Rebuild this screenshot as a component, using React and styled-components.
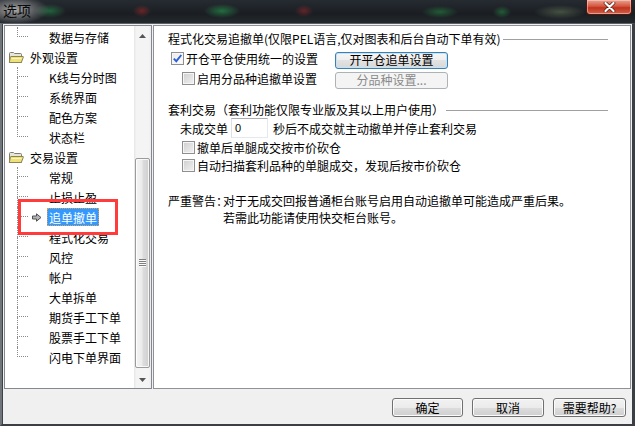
import React from "react";
import styled, { createGlobalStyle, css } from "styled-components";

const GlobalStyle = createGlobalStyle`
  html, body { margin: 0; padding: 0; background: #1b1f24; }
  body { width: 635px; height: 426px; overflow: hidden; }
  * { box-sizing: border-box; }
`;

const FONT = `"Noto Sans CJK SC", "Liberation Sans", sans-serif`;

const Window = styled.div`
  width: 635px;
  height: 426px;
  display: flex;
  flex-direction: column;
  overflow: hidden;
  font-family: ${FONT};
  font-size: 12px;
  color: #000;
`;

const TitleBar = styled.div`
  flex: none;
  height: 23px;
  display: flex;
  justify-content: space-between;
  align-items: flex-start;
  background:
    radial-gradient(ellipse 34px 14px at 15px 10px, rgba(175,175,175,0.95), rgba(150,150,150,0) 100%),
    radial-gradient(ellipse 16px 7px at 50px 11px, rgba(40,150,80,0.55), rgba(40,150,80,0) 100%),
    radial-gradient(ellipse 9px 6px at 142px 11px, rgba(170,40,40,0.55), rgba(170,40,40,0) 100%),
    radial-gradient(ellipse 18px 7px at 222px 11px, rgba(40,160,80,0.6), rgba(40,160,80,0) 100%),
    radial-gradient(ellipse 9px 6px at 304px 11px, rgba(170,40,40,0.5), rgba(170,40,40,0) 100%),
    radial-gradient(ellipse 18px 6px at 440px 12px, rgba(40,150,70,0.5), rgba(40,150,70,0) 100%),
    radial-gradient(ellipse 9px 6px at 502px 12px, rgba(40,150,70,0.5), rgba(40,150,70,0) 100%),
    radial-gradient(ellipse 26px 7px at 560px 12px, rgba(120,140,100,0.45), rgba(120,140,100,0) 100%),
    linear-gradient(to bottom, #262b31 0%, #1a1e23 60%, #24292e 100%);
`;

const Title = styled.div`
  padding: 2px 0 0 3px;
  font-size: 14px;
  line-height: 17px;
  color: #0a0a0a;
`;

const CloseButton = styled.div`
  width: 46px;
  height: 15px;
  margin-right: 3px;
  display: flex;
  align-items: center;
  justify-content: center;
  border: 1px solid #4a1a12;
  border-top: none;
  border-radius: 0 0 4px 4px;
  background: linear-gradient(to bottom, #e8a393 0%, #d4553e 45%, #c1321c 55%, #d2624a 100%);
  box-shadow: inset 0 0 0 1px rgba(255,220,210,0.5);
`;

const Body = styled.div`
  flex: 1;
  display: flex;
  flex-direction: column;
  background: #f0f0f0;
  border-top: 1px solid #5a6066;
  border-left: 2px solid #70757a;
  border-right: 3px solid #3a3f45;
  border-bottom: 2px solid #3a3f45;
  box-shadow: inset 1px 0 0 #3e4247;
  padding: 1px 1px 0 2px;
`;

const Main = styled.div`
  flex: none;
  height: 364px;
  display: flex;
  gap: 1px;
`;

const TreePanel = styled.div`
  width: 148px;
  flex: none;
  display: flex;
  background: #fff;
  border: 1px solid #828790;
`;

const TreeList = styled.div`
  flex: 1;
  min-width: 0;
  padding-top: 1px;
  display: flex;
  flex-direction: column;
  overflow: hidden;
`;

const TreeRow = styled.div`
  height: 20px;
  flex: none;
  display: flex;
  align-items: center;
  padding-left: ${(p) => (p.$parent ? 3 : 0)}px;
  ${(p) => p.$selected && css`position: relative;`}
`;

const Guide = styled.span`
  width: 42px;
  height: 20px;
  flex: none;
  display: flex;
  padding-left: 12px;
`;

const Connector = styled.span`
  width: 11px;
  height: 20px;
  display: flex;
  flex-direction: column;
`;

const ConnectorTop = styled.span`
  height: 10px;
  border-left: 1px dotted #8a8a8a;
  border-bottom: 1px dotted #8a8a8a;
`;

const ConnectorBottom = styled.span`
  flex: 1;
  border-left: 1px dotted ${(p) => (p.$last ? "transparent" : "#8a8a8a")};
`;

const ArrowSlot = styled.span`
  flex: 1;
  display: flex;
  align-items: center;
  padding-left: 4px;
`;

const Label = styled.span`
  height: 18px;
  line-height: 17px;
  padding: 0 1px;
  white-space: nowrap;
  margin-left: ${(p) => (p.$parent ? 4 : 0)}px;
  border: 1px solid transparent;
  ${(p) =>
    p.$selected &&
    css`
      background: #3399ff;
      color: #fff;
      border: 1px dotted #e0a050;
    `}
`;

const Annotation = styled.span`
  position: absolute;
  left: 13px;
  top: -8px;
  width: 100px;
  height: 36px;
  border: 3px solid #ff3b3b;
  pointer-events: none;
  z-index: 2;
`;

const ScrollBar = styled.div`
  width: 17px;
  flex: none;
  display: flex;
  flex-direction: column;
  background: linear-gradient(to right, #e6e6e6 0%, #f4f4f4 15%, #f4f4f4 85%, #ececec 100%);
`;

const ScrollArrow = styled.div`
  height: 17px;
  flex: none;
  display: flex;
  align-items: center;
  justify-content: center;
  padding-top: ${(p) => (p.$down ? 0 : 3)}px;
`;

const ScrollTrack = styled.div`
  flex: 1;
  display: flex;
  flex-direction: column;
  padding: 115px 1px 3px 1px;
`;

const Thumb = styled.div`
  flex: 1;
  display: flex;
  align-items: center;
  justify-content: center;
  border: 1px solid #9b9b9b;
  border-radius: 2px;
  background: linear-gradient(to right, #f4f4f4 0%, #ececec 45%, #dcdcdc 55%, #cfcfcf 100%);
  box-shadow: inset 0 0 0 1px rgba(255,255,255,0.8);
`;

const Grip = styled.div`
  width: 7px;
  height: 8px;
  background: repeating-linear-gradient(to bottom, #7e7e7e 0 1px, #fafafa 1px 2px);
`;

const RightPanel = styled.div`
  flex: 1;
  display: flex;
  flex-direction: column;
  background: #fff;
  border: 1px solid #8e9198;
  padding: 5px 22px 0 14px;
`;

const GroupHeader = styled.div`
  height: 16px;
  line-height: 16px;
  display: flex;
  align-items: center;
  margin-top: ${(p) => p.$mt || 0}px;
  white-space: nowrap;
`;

const GroupLine = styled.span`
  flex: 1;
  height: 1px;
  background: #a0a0a0;
  margin-left: 2px;
`;

const SettingGrid = styled.div`
  display: grid;
  grid-template-columns: 167px 113px;
  grid-auto-rows: 18px;
  row-gap: 2px;
  margin-top: 4px;
  align-items: center;
`;

const CheckRow = styled.div`
  display: flex;
  align-items: center;
  gap: 2px;
  height: ${(p) => p.$h || 18}px;
  padding-left: ${(p) => p.$indent || 0}px;
  padding-bottom: ${(p) => p.$lift || 0}px;
  white-space: nowrap;
`;

const Box = styled.span`
  width: 13px;
  height: 13px;
  flex: none;
  display: inline-flex;
  align-items: center;
  justify-content: center;
  border: 1px solid #8e8f8f;
  background: ${(p) =>
    p.$checked
      ? "linear-gradient(135deg, #e9e9e9, #ffffff)"
      : "linear-gradient(135deg, #cfcfcf, #f2f2f2)"};
  box-shadow: inset 0 0 0 1px #f6f6f6;
`;

const Button = styled.div`
  width: ${(p) => p.$w || 72}px;
  height: ${(p) => p.$h || 19}px;
  display: flex;
  align-items: center;
  justify-content: center;
  white-space: nowrap;
  border-radius: 3px;
  line-height: 1;
  border: 1px solid #707070;
  background: linear-gradient(to bottom, #f2f2f2 0%, #ebebeb 50%, #dddddd 50%, #cfcfcf 100%);
  box-shadow: inset 0 0 0 1px #fbfbfb;
  ${(p) =>
    p.$focused &&
    css`
      border-color: #3c7fb1;
      box-shadow: inset 0 0 0 1px #c3e4f7;
      background: linear-gradient(to bottom, #f6f6f6 0%, #eeeeee 50%, #e2e2e2 50%, #d8d8d8 100%);
    `}
  ${(p) =>
    p.$disabled &&
    css`
      border-color: #adb2b5;
      background: #f4f4f4;
      box-shadow: none;
      color: #8a8a8a;
    `}
`;

const InputRow = styled.div`
  display: flex;
  align-items: center;
  height: 20px;
  padding-left: 12px;
  white-space: nowrap;
`;

const NumberInput = styled.div`
  width: 37px;
  height: 20px;
  margin: 0 5px 0 3px;
  padding-left: 3px;
  display: flex;
  align-items: center;
  background: #fff;
  border: 1px solid #e3e9ef;
  border-top-color: #abadb3;
  border-left-color: #dbdfe6;
  font-family: "Liberation Sans", sans-serif;
  font-size: 11px;
`;

const Warning = styled.div`
  display: grid;
  grid-template-columns: 55px auto;
  line-height: 17px;
  margin-top: 18px;
  white-space: nowrap;
`;

const ButtonBar = styled.div`
  flex: 1;
  display: flex;
  justify-content: flex-end;
  align-items: flex-start;
  gap: 9px;
  padding: 9px 5px 0 0;
`;

const FolderIcon = () => (
  <svg width="16" height="13" viewBox="0 0 16 13">
    <path d="M1.5 2.5 Q1.5 1.5 2.5 1.5 H5.5 L6.5 2.5 H12.5 Q13.5 2.5 13.5 3.5 V11.5 H1.5 Z" fill="#e6e6dc" stroke="#7d7d70" />
    <path d="M3 5.5 H15 Q15.6 5.5 15.3 6.3 L13.3 11.5 H1.3 L2.4 6.1 Q2.6 5.5 3 5.5 Z" fill="#efe17a" stroke="#8b8452" />
    <path d="M3.5 7.5 H13.5" stroke="#fbf4bd" />
  </svg>
);

const ArrowIcon = () => (
  <svg width="10" height="9" viewBox="0 0 10 9">
    <path d="M0.5 3 H4.5 V0.8 L9 4.5 L4.5 8.2 V6 H0.5 Z" fill="#b4b4b4" stroke="#505050" />
  </svg>
);

const CheckMark = () => (
  <svg width="11" height="11" viewBox="0 0 11 11">
    <path d="M1.8 5.6 L4.3 8.2 L9.3 2" stroke="#2b5fd6" strokeWidth="1.9" fill="none" />
  </svg>
);

const CloseGlyph = () => (
  <svg width="13" height="10" viewBox="0 0 13 10">
    <path d="M2.5 1 L10.5 9 M10.5 1 L2.5 9" stroke="#5a1a10" strokeWidth="3.6" strokeLinecap="round" />
    <path d="M2.5 1 L10.5 9 M10.5 1 L2.5 9" stroke="#ffffff" strokeWidth="2.2" strokeLinecap="round" />
  </svg>
);

const ScrollTri = ({ down }) => (
  <svg width="7" height="4" viewBox="0 0 7 4">
    <path d={down ? "M0 0 L7 0 L3.5 4 Z" : "M0 4 L3.5 0 L7 4 Z"} fill="#555" />
  </svg>
);

const Checkbox = ({ checked }) => <Box $checked={checked}>{checked && <CheckMark />}</Box>;

const tree = [
  { label: "数据与存储", last: true },
  { label: "外观设置", parent: true },
  { label: "K线与分时图" },
  { label: "系统界面" },
  { label: "配色方案" },
  { label: "状态栏", last: true },
  { label: "交易设置", parent: true },
  { label: "常规" },
  { label: "止损止盈" },
  { label: "追单撤单", selected: true },
  { label: "程式化交易" },
  { label: "风控" },
  { label: "帐户" },
  { label: "大单拆单" },
  { label: "期货手工下单" },
  { label: "股票手工下单" },
  { label: "闪电下单界面", last: true },
];

export default function App() {
  return (
    <Window>
      <GlobalStyle />
      <TitleBar>
        <Title>选项</Title>
        <CloseButton>
          <CloseGlyph />
        </CloseButton>
      </TitleBar>
      <Body>
        <Main>
          <TreePanel>
            <TreeList>
              {tree.map((item) =>
                item.parent ? (
                  <TreeRow key={item.label} $parent>
                    <FolderIcon />
                    <Label $parent>{item.label}</Label>
                  </TreeRow>
                ) : (
                  <TreeRow key={item.label} $selected={item.selected}>
                    <Guide>
                      <Connector>
                        <ConnectorTop />
                        <ConnectorBottom $last={item.last} />
                      </Connector>
                      <ArrowSlot>{item.selected && <ArrowIcon />}</ArrowSlot>
                    </Guide>
                    <Label $selected={item.selected}>{item.label}</Label>
                    {item.selected && <Annotation />}
                  </TreeRow>
                )
              )}
            </TreeList>
            <ScrollBar>
              <ScrollArrow>
                <ScrollTri />
              </ScrollArrow>
              <ScrollTrack>
                <Thumb>
                  <Grip />
                </Thumb>
              </ScrollTrack>
              <ScrollArrow $down>
                <ScrollTri down />
              </ScrollArrow>
            </ScrollBar>
          </TreePanel>
          <RightPanel>
            <GroupHeader>
              <span>程式化交易追撤单(仅限PEL语言,仅对图表和后台自动下单有效)</span>
              <GroupLine />
            </GroupHeader>
            <SettingGrid>
              <CheckRow $indent={3} $lift={3}>
                <Checkbox checked />
                <span>开仓平仓使用统一的设置</span>
              </CheckRow>
              <Button $w={113} $h={17} $focused>开平仓追单设置</Button>
              <CheckRow $indent={14} $lift={3}>
                <Checkbox />
                <span>启用分品种追撤单设置</span>
              </CheckRow>
              <Button $w={113} $h={17} $disabled>分品种设置...</Button>
            </SettingGrid>
            <GroupHeader $mt={13}>
              <span>套利交易（套利功能仅限专业版及其以上用户使用）</span>
              <GroupLine />
            </GroupHeader>
            <InputRow>
              <span>未成交单</span>
              <NumberInput>0</NumberInput>
              <span>秒后不成交就主动撤单并停止套利交易</span>
            </InputRow>
            <CheckRow $indent={14}>
              <Checkbox />
              <span>撤单后单腿成交按市价砍仓</span>
            </CheckRow>
            <CheckRow $indent={14}>
              <Checkbox />
              <span>自动扫描套利品种的单腿成交，发现后按市价砍仓</span>
            </CheckRow>
            <Warning>
              <span>严重警告：</span>
              <span>对于无成交回报普通柜台账号启用自动追撤单可能造成严重后果。</span>
              <span />
              <span>若需此功能请使用快交柜台账号。</span>
            </Warning>
          </RightPanel>
        </Main>
        <ButtonBar>
          <Button $w={71}>确定</Button>
          <Button $w={72}>取消</Button>
          <Button $w={73}>需要帮助?</Button>
        </ButtonBar>
      </Body>
    </Window>
  );
}
